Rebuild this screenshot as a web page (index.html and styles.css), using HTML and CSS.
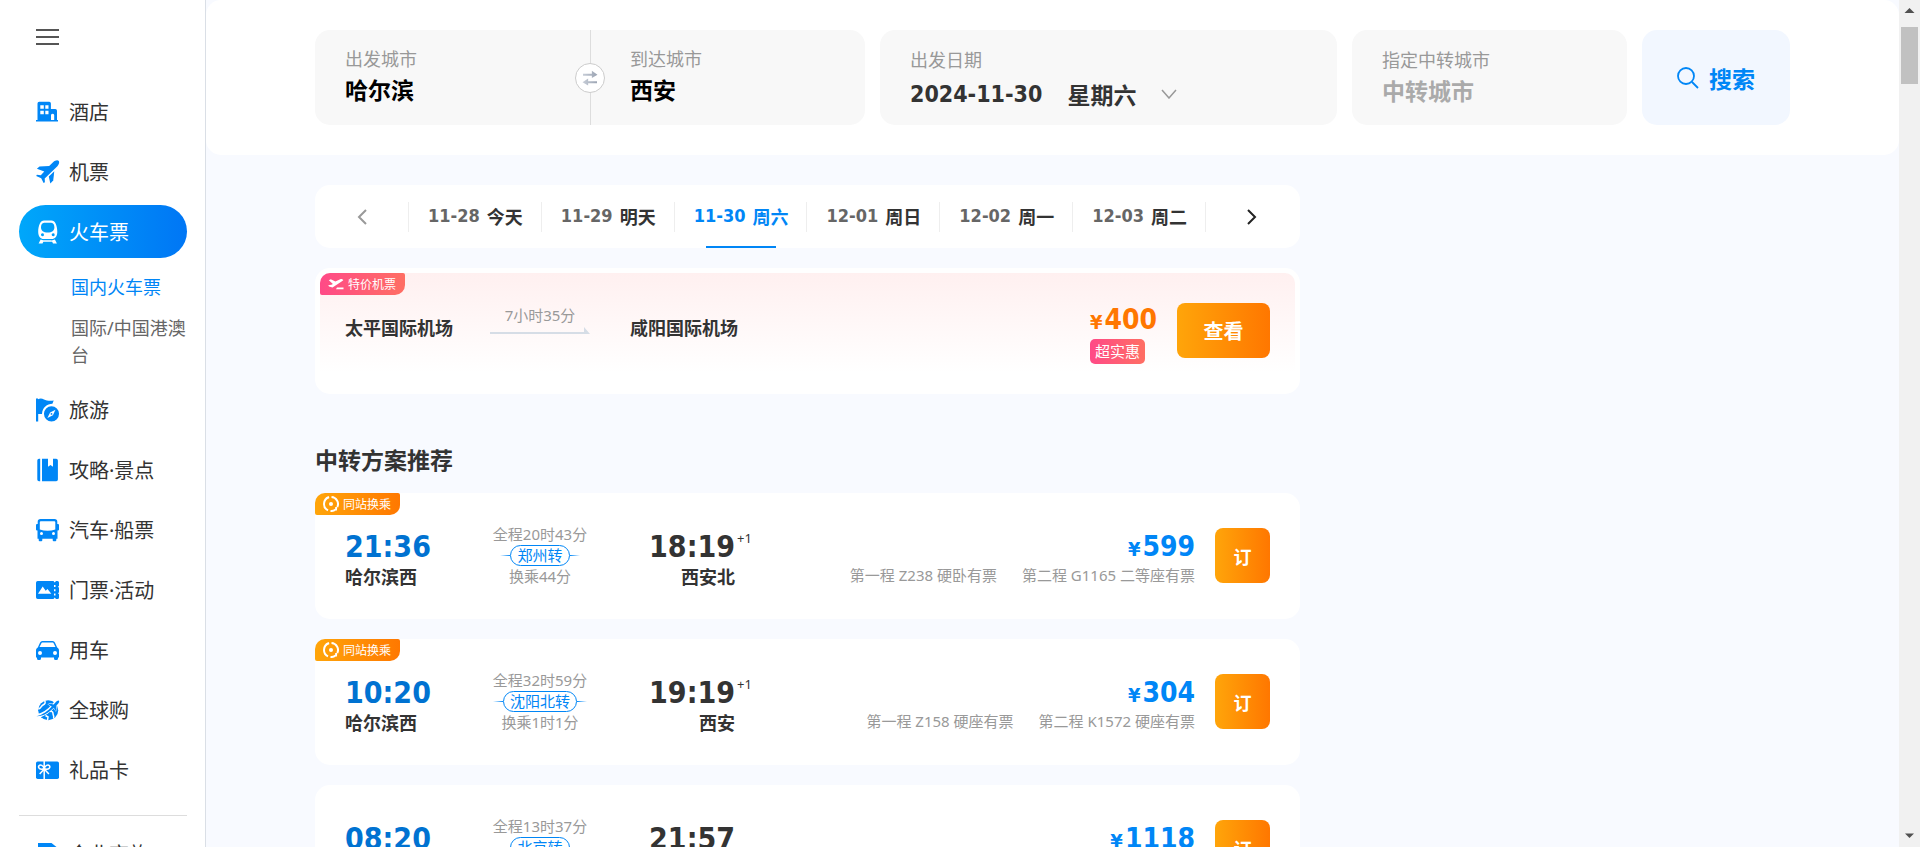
FILE: index.html
```html
<!DOCTYPE html>
<html lang="zh-CN">
<head>
<meta charset="utf-8">
<title>火车票 中转方案</title>
<link rel="stylesheet" href="styles.css">
</head>
<body>
<div class="app">
  <aside class="sidebar">
    <button class="menu-toggle" type="button" aria-label="菜单"><svg class="menu-icon" viewBox="0 0 24 24"><path d="M0 5h23M0 12h23M0 19h23"/></svg></button>
    <nav>
      <ul class="nav-list">
        <li><a class="nav-item" href="#"><svg class="nav-icon" viewBox="0 0 24 24"><path fill-rule="evenodd" d="M1.500 20V3.500a1.700 1.700 0 0 1 1.700-1.700h10a1.700 1.700 0 0 1 1.700 1.700V9h4.400A1.700 1.700 0 0 1 21 10.700V20h1v1.600H0V20zM4.300 5.300v3.500h3.500V5.300zm5 0v3.500h3.200V5.300zm-5 5.400v3.600h3.500v-3.600zm5 0v3.600h3.200v-3.600zM15 20h3.200v-5a1.700 1.700 0 0 0-3.200 0z"/></svg>酒店</a></li>
        <li><a class="nav-item" href="#"><svg class="nav-icon" viewBox="0 0 24 24"><path d="M22.600.7c-1.200-1.200-3.700-.3-5.300 1.200l-4.100 4-9.700.5L.9 8.700l7.400 2.700-3.500 3.800-3.900-.5L.2 16l5 2.300L7.600 23l1.300-.8-.2-3.700L21.400 6.200c1.500-1.600 2.400-4.300 1.200-5.500z"/><path d="M18.300 11.200l-5.500 5.200 1.500 7 2.900-2.800z"/></svg>机票</a></li>
        <li>
          <a class="nav-item active" href="#"><svg class="nav-icon" viewBox="0 0 24 24"><path fill-rule="evenodd" d="M8 .5h7.500c3.500 0 5.800 4.800 5.800 11.500 0 4.500-2.500 7-5.500 7H7.700c-3 0-5.500-2.500-5.500-7C2.200 5.300 4.500.5 8 .5zm.2 2.300C5.800 2.800 5 5 5 7.500c0 3 2.500 5 6.700 5s6.700-2 6.700-5c0-2.500-.8-4.700-3.200-4.700zM6.400 13.300a1.500 1.500 0 1 0 .1 3 1.500 1.500 0 0 0-.1-3zm10.700 0a1.500 1.500 0 1 0 .1 3 1.500 1.500 0 0 0-.1-3z"/><path d="M4.600 19.500l3.300 1-1.400 3H2.600zm14.300 0l-3.300 1 1.400 3h3.900zM7.500 20.300h8.500v1.500H7.500z"/></svg>火车票</a>
          <ul class="sub-list">
            <li><a class="sub-item current" href="#">国内火车票</a></li>
            <li><a class="sub-item" href="#">国际/中国港澳台</a></li>
          </ul>
        </li>
        <li><a class="nav-item" href="#"><svg class="nav-icon" viewBox="0 0 24 24"><path d="M0 .5h2v.7c2-.9 4-.8 6 .2s6 1.600 9.700 1l-1.300 3.400C11 6.300 6.500 9 6 16H2.200v7.500H0z"/><path fill-rule="evenodd" d="M15.500 8.300a7.500 7.500 0 1 1 0 15.100 7.500 7.500 0 0 1 0-15.100zm4 3.500l-5.400 2.700-2.700 5.500 5.500-2.700zm-4 3.200a.9.900 0 1 1 0 1.800.9.900 0 0 1 0-1.800z"/></svg>旅游</a></li>
        <li><a class="nav-item" href="#"><svg class="nav-icon" viewBox="0 0 24 24"><path d="M3 .7h1.200v22.600H3A1.700 1.700 0 0 1 1.300 21.600V2.400A1.700 1.700 0 0 1 3 .7zm3 0h6v8l2.500-1.800L17 8.700v-8h3.200a1.700 1.700 0 0 1 1.700 1.700v19.200a1.700 1.700 0 0 1-1.700 1.700H6z"/></svg>攻略·景点</a></li>
        <li><a class="nav-item" href="#"><svg class="nav-icon" viewBox="0 0 24 24"><path fill-rule="evenodd" d="M4.500 1h14a2.800 2.800 0 0 1 2.800 2.800V6H22a1 1 0 0 1 1 1v4.500a1 1 0 0 1-1 1h-.5v8.300h-1.200v1.500a1 1 0 0 1-1 1h-1.600a1 1 0 0 1-1-1v-1.500H6.300v1.500a1 1 0 0 1-1 1H3.700a1 1 0 0 1-1-1v-1.500H1.500v-8.300H1a1 1 0 0 1-1-1V7a1 1 0 0 1 1-1h.7V3.800A2.800 2.800 0 0 1 4.500 1zm.3 2.200a1 1 0 0 0-1 1v7.300c5 1.600 10.500 1.600 15.500 0V4.200a1 1 0 0 0-1-1zm.7 10.900a1.500 1.500 0 1 0 0 3 1.500 1.500 0 0 0 0-3zm12 0a1.500 1.500 0 1 0 0 3 1.500 1.500 0 0 0 0-3z"/></svg>汽车·船票</a></li>
        <li><a class="nav-item" href="#"><svg class="nav-icon" viewBox="0 0 24 24"><path fill-rule="evenodd" d="M1.700 3h15.800l1.200 1.500L20 3h1.500A1.500 1.500 0 0 1 23 4.500v3.200l-1 1 1 1v4.600l-1 1 1 1v3.200a1.500 1.500 0 0 1-1.500 1.500H20l-1.300-1.500-1.200 1.500H1.700A1.700 1.700 0 0 1 0 19.300V4.700A1.700 1.700 0 0 1 1.700 3zM2 15.800h13.300l-3.800-4.700-1.800 1.600-3-4.200zM18 7v2h1.500V7zm0 4.200v2h1.500v-2zm0 4.300v2h1.500v-2z"/></svg>门票·活动</a></li>
        <li><a class="nav-item" href="#"><svg class="nav-icon" viewBox="0 0 24 24"><path fill-rule="evenodd" d="M6.300 3h10.400a2.500 2.500 0 0 1 2.200 1.500l2.300 4.900c1.100.6 1.800 1.600 1.800 3v7h-1v1a1.500 1.500 0 0 1-1.500 1.500h-1A1.500 1.500 0 0 1 18 20.400v-1H5v1a1.500 1.500 0 0 1-1.500 1.500h-1A1.500 1.500 0 0 1 1 20.400v-1H0v-7c0-1.400.7-2.400 1.800-3l2.300-4.900A2.500 2.500 0 0 1 6.300 3zm0 1.500c-.5 0-.7.300-.9.700L3.500 9h16l-1.900-3.800c-.2-.4-.4-.7-.9-.7zM4 13a2 2 0 1 0 0 4 2 2 0 0 0 0-4zm15 0a2 2 0 1 0 0 4 2 2 0 0 0 0-4z"/></svg>用车</a></li>
        <li><a class="nav-item" href="#"><svg class="nav-icon" viewBox="0 0 24 24"><circle cx="12.200" cy="12.300" r="10"/><path class="cut thin" d="M8.500 2.500c1.500 2 .5 3.500-1.500 4.500s-1.500 3-4.500 4M14 13.500c1.500-.5 3 0 3 2s1.500 2.500.5 5M9.500 17.500l2.500 1.500-.5 3.500"/><path class="cut" d="M0 18.300C7.500 17.300 14 12 18.500 6.500L24 0"/><path d="M.5 18.200C7 16.800 12 13 15.800 8.600l-3.600-2.200.8-.9 4.600.9 1.600-1.700c1.500-1.500 3-2.500 3.700-2s.2 2-1.300 3.600l-1.500 1.600.6 4.500-.9.800-2-3.500C13.500 14 8 18.300.5 18.200z" class="jet"/></svg>全球购</a></li>
        <li><a class="nav-item" href="#"><svg class="nav-icon" viewBox="0 0 24 24"><rect y="3.500" width="23" height="17.500" rx="1.700"/><path class="cut thin" d="M8.200 3v19M8 10.500C4 12.500 1.700 9.600 3 7.800c1.300-1.700 4.500-.3 5 2.700zm.4 0c4 2 6.300-.9 5-2.700-1.300-1.700-4.500-.3-5 2.700zM8.200 11l-4.500 5M8.200 11l4.700 5"/></svg>礼品卡</a></li>
      </ul>
      <hr class="nav-rule">
      <ul class="nav-list">
        <li><a class="nav-item" href="#"><svg class="nav-icon" viewBox="0 0 24 24"><path d="M2 1h13.500l5 4v17H2z"/></svg>企业商旅</a></li>
      </ul>
    </nav>
  </aside>

  <main class="main">
    <header class="topbar">
      <form class="search">
        <div class="field cities">
          <div class="city">
            <label class="field-label" for="from">出发城市</label>
            <input class="field-input" id="from" value="哈尔滨">
          </div>
          <div class="city city-to">
            <label class="field-label" for="to">到达城市</label>
            <input class="field-input" id="to" value="西安">
          </div>
          <button class="swap" type="button" aria-label="交换城市"><svg viewBox="0 0 30 30"><defs><linearGradient id="swapA"><stop offset="0" stop-color="#c8ced8"/><stop offset="1" stop-color="#9aa3b2"/></linearGradient></defs><path fill="url(#swapA)" d="M7.500 10.500H17V7.200l6 4.400-6 3.400v-2.400H7.500zM22.500 18.500H13v-3l-6 4 6 3.600v-2.500h9.500z"/></svg></button>
        </div>
        <div class="field date">
          <span class="field-label" id="date-label">出发日期</span>
          <button class="date-value" type="button" aria-labelledby="date-label"><span>2024-11-30</span><span>星期六</span><svg class="chevron" viewBox="0 0 16 10"><path d="M1 1l7 8 7-8"/></svg></button>
        </div>
        <div class="field via">
          <label class="field-label" for="via">指定中转城市</label>
          <input class="field-input" id="via" placeholder="中转城市">
        </div>
        <button class="search-btn" type="submit"><svg class="search-icon" viewBox="0 0 22 22"><circle cx="9" cy="9" r="8"/><path d="M15 15l6 6"/></svg>搜索</button>
      </form>
    </header>

    <div class="content">
      <div class="results">
        <div class="dates">
          <button class="date-nav" type="button" aria-label="前一天"><svg class="arrow muted" viewBox="0 0 10 16"><path d="M9 1L2 8l7 7"/></svg></button>
          <button class="day" type="button"><span class="day-num">11-28</span>今天</button>
          <button class="day" type="button"><span class="day-num">11-29</span>明天</button>
          <button class="day selected" type="button"><span class="day-num">11-30</span>周六</button>
          <button class="day" type="button"><span class="day-num">12-01</span>周日</button>
          <button class="day" type="button"><span class="day-num">12-02</span>周一</button>
          <button class="day" type="button"><span class="day-num">12-03</span>周二</button>
          <button class="date-nav next" type="button" aria-label="后一天"><svg class="arrow" viewBox="0 0 10 16"><path d="M1 1l7 7-7 7"/></svg></button>
        </div>

        <section class="flight">
          <div class="flight-inner">
            <span class="tag tag-pink"><svg class="tag-plane" viewBox="0 0 16 12"><path d="M.8 2.300l2-1 4.600 2.200 4.800-2.300c1.400-.6 3 .4 3 .9 0 .6-.8 1-1.600 1.400L4.500 9.600 1 8.500l-.8-1.300 3.200-.4 1.500-.8zM9 9.600h6.500v1.600H8z"/></svg>特价机票</span>
            <div class="airport">太平国际机场</div>
            <div class="flight-time">7小时35分<svg class="flight-line" viewBox="0 0 100 7"><path d="M0 5h94V0l6 7H0z"/></svg></div>
            <div class="airport">咸阳国际机场</div>
            <div class="flight-price">
              <div class="price orange"><span class="yen">¥</span>400</div>
              <span class="deal">超实惠</span>
            </div>
            <button class="btn btn-view" type="button">查看</button>
          </div>
        </section>

        <h2 class="section-title">中转方案推荐</h2>

        <article class="plan">
          <span class="tag tag-orange"><svg class="tag-ring" viewBox="0 0 16 16"><path d="M6 1.300A7 7 0 0 0 5 14.300M7.500 15a7 7 0 0 0 5-1.500M14.300 11A7 7 0 0 0 8.500 1M3 2.500l3-1.500M13 14.500l.2-3.500"/><circle cx="8" cy="8" r="2"/></svg>同站换乘</span>
          <div class="depart"><div class="time">21:36</div><div class="station">哈尔滨西</div></div>
          <div class="transfer"><span>全程20时43分</span><span class="via-line"><span class="via-pill">郑州转</span></span><span>换乘44分</span></div>
          <div class="arrive"><div class="time">18:19<sup class="plus">+1</sup></div><div class="station">西安北</div></div>
          <div class="fare"><div class="price"><span class="yen">¥</span>599</div><div class="legs"><span>第一程 Z238 硬卧有票</span><span>第二程 G1165 二等座有票</span></div></div>
          <button class="btn" type="button">订</button>
        </article>

        <article class="plan">
          <span class="tag tag-orange"><svg class="tag-ring" viewBox="0 0 16 16"><path d="M6 1.300A7 7 0 0 0 5 14.300M7.500 15a7 7 0 0 0 5-1.500M14.300 11A7 7 0 0 0 8.500 1M3 2.500l3-1.500M13 14.500l.2-3.500"/><circle cx="8" cy="8" r="2"/></svg>同站换乘</span>
          <div class="depart"><div class="time">10:20</div><div class="station">哈尔滨西</div></div>
          <div class="transfer"><span>全程32时59分</span><span class="via-line"><span class="via-pill">沈阳北转</span></span><span>换乘1时1分</span></div>
          <div class="arrive"><div class="time">19:19<sup class="plus">+1</sup></div><div class="station">西安</div></div>
          <div class="fare"><div class="price"><span class="yen">¥</span>304</div><div class="legs"><span>第一程 Z158 硬座有票</span><span>第二程 K1572 硬座有票</span></div></div>
          <button class="btn" type="button">订</button>
        </article>

        <article class="plan">
          <div class="depart"><div class="time">08:20</div></div>
          <div class="transfer"><span>全程13时37分</span><span class="via-line"><span class="via-pill">北京转</span></span></div>
          <div class="arrive"><div class="time">21:57</div></div>
          <div class="fare"><div class="price"><span class="yen">¥</span>1118</div></div>
          <button class="btn" type="button">订</button>
        </article>
      </div>
    </div>
  </main>

  <div class="scrollbar" aria-hidden="true">
    <svg class="scroll-arrow" viewBox="0 0 21 21"><path d="M5.500 13l5-5 5 5z"/></svg>
    <div class="scroll-track"><div class="scroll-thumb"></div></div>
    <svg class="scroll-arrow" viewBox="0 0 21 21"><path d="M6 7.500l4.500 4.500L15 7.500z"/></svg>
  </div>
</div>
</body>
</html>
```

FILE: styles.css
```css
* { box-sizing: border-box; }

:root {
  --blue: #0086f6;
  --ink: #333;
  --muted: #999;
  --page: #f8faff;
  --bold-face: "DejaVu Sans Condensed", "Noto Sans CJK SC", sans-serif;
  --text-face: "Noto Sans", "Noto Sans CJK SC", sans-serif;
}

body {
  margin: 0;
  color: var(--ink);
  background: var(--page);
  font-family: var(--text-face);
  font-size: 15px;
  overflow: hidden;
}

button, input {
  border: 0;
  padding: 0;
  margin: 0;
  background: none;
  color: inherit;
  font: inherit;
}

button { cursor: pointer; }
a { color: inherit; text-decoration: none; }
ul { list-style: none; margin: 0; padding: 0; }

.app {
  display: grid;
  grid-template-columns: 206px minmax(0, 1fr) 21px;
  height: 100vh;
  overflow: hidden;
}

/* Sidebar */
.sidebar {
  min-height: 0;
  overflow: hidden;
  padding: 25px 13px 0 19px;
  background: #fff;
  border-right: 1px solid #dadfe6;
}

.menu-toggle { display: block; height: 24px; padding-left: 17px; margin-bottom: 36px; }
.menu-icon { display: block; width: 24px; height: 24px; fill: none; stroke: #555; stroke-width: 2; }

.nav-list { display: grid; gap: 7px; }
.nav-item {
  display: flex;
  align-items: center;
  gap: 9px;
  height: 53px;
  margin-right: 5px;
  padding-left: 17px;
  border-radius: 27px;
  font-size: 20px;
}
.nav-item.active { color: #fff; background: linear-gradient(90deg, #00a7fa, #0076f5); }
.nav-icon { flex: none; width: 24px; height: 24px; fill: var(--blue); }
.active .nav-icon { fill: #fff; }
.cut { fill: none; stroke: #fff; stroke-width: 4; }
.cut.thin { stroke-width: 1.500; }
.jet { stroke: #fff; stroke-width: 1; paint-order: stroke; }

.sub-list { display: grid; gap: 14px; padding: 16px 0 7px 52px; }
.sub-item { display: block; font-size: 18px; line-height: 27px; color: #666; }
.sub-item.current { color: var(--blue); }
.nav-rule { margin: 19px 5px 11px 0; border: 0; border-top: 1px solid #ddd; }

/* Search form */
.main { min-width: 0; min-height: 0; overflow: hidden; }
.topbar { padding: 30px 16px; background: #fff; border-radius: 15px; }
.search {
  display: grid;
  grid-template-columns: 550fr 457fr 275fr 148fr;
  gap: 15px;
  max-width: 1475px;
  margin: 0 auto;
}
.field { min-width: 0; min-height: 95px; padding: 17px 30px 0; background: #f8f8f8; border-radius: 15px; }
.field-label { display: block; font-size: 18px; line-height: 26px; color: var(--muted); }
.field-input {
  display: block;
  width: 100%;
  height: 34px;
  font-family: var(--bold-face);
  font-size: 23px;
  font-weight: 700;
  color: #000;
}
.field-input::placeholder { color: #aaa; opacity: 1; }
.via .field-input { height: 38px; }
.cities { position: relative; display: grid; grid-template-columns: 1fr 1fr; padding: 0; }
.city { min-width: 0; padding: 16px 30px 0; }
.city-to { padding-left: 39px; border-left: 1px solid #ddd; }
.swap {
  position: absolute;
  top: 50%;
  left: 50%;
  width: 30px;
  height: 30px;
  margin: -15px;
  border: 1px solid #ccc;
  border-radius: 50%;
  background: #fff;
}
.swap svg { display: block; width: 28px; height: 28px; }
.date-value {
  display: flex;
  align-items: center;
  gap: 25px;
  height: 42px;
  font-family: var(--bold-face);
  font-size: 23px;
  font-weight: 700;
}
.chevron { width: 16px; height: 10px; fill: none; stroke: #999; stroke-width: 1.500; }
.search-btn {
  display: flex;
  align-items: center;
  justify-content: center;
  gap: 10px;
  border-radius: 15px;
  background: #f2f7ff;
  color: var(--blue);
  font-family: var(--bold-face);
  font-size: 23px;
  font-weight: 700;
}
.search-icon { width: 22px; height: 22px; fill: none; stroke: currentColor; stroke-width: 1.800; }

/* Results */
.content {
  display: grid;
  grid-template-columns: 985fr 490fr;
  width: calc(100% - 32px);
  max-width: 1475px;
  margin: 30px auto 0;
}
.results { min-width: 0; }

.dates {
  display: grid;
  grid-template-columns: 93px repeat(6, 1fr) 95px;
  height: 63px;
  margin-bottom: 20px;
  border-radius: 15px;
  background: #fff;
}
.day {
  position: relative;
  display: flex;
  align-items: center;
  justify-content: center;
  gap: 7px;
  padding: 0 0 2px 2px;
  font-family: var(--bold-face);
  font-size: 18px;
  font-weight: 700;
  background: linear-gradient(#eee, #eee) left center / 1px 30px no-repeat;
}
.day-num { color: #666; }
.selected, .selected .day-num { color: var(--blue); }
.selected::after {
  content: "";
  position: absolute;
  bottom: 0;
  left: calc(50% - 34px);
  width: 70px;
  height: 2px;
  background: var(--blue);
}
.date-nav { display: grid; place-items: center; }
.date-nav.next { background: linear-gradient(#eee, #eee) left center / 1px 30px no-repeat; }
.arrow { width: 10px; height: 16px; fill: none; stroke: #222; stroke-width: 2; }
.arrow.muted { stroke: #999; }

.tag {
  position: absolute;
  top: 0;
  left: 0;
  display: flex;
  align-items: center;
  height: 22px;
  border-radius: 10px 2px 10px 2px;
  padding: 0 9px 0 8px;
  gap: 4px;
  color: #fff;
  font-size: 12px;
  white-space: nowrap;
}
.tag-pink { background: linear-gradient(90deg, #ff4a87, #ff6e63); }
.tag-orange { background: linear-gradient(90deg, #ffa50a, #ff7800); }
.tag-plane { width: 16px; height: 12px; fill: #fff; }
.tag-ring { width: 16px; height: 16px; fill: none; stroke: #fff; stroke-width: 2; }
.tag-ring circle { fill: #fff; stroke: none; }

.flight { min-height: 126px; padding: 5px; border-radius: 15px; background: #fff; }
.flight-inner {
  position: relative;
  display: flex;
  align-items: flex-start;
  min-height: 116px;
  padding: 30px 25px 0;
  border-radius: 10px;
  background: linear-gradient(#fff0f0, #fff 100px);
}
.airport {
  width: 145px;
  padding-top: 12px;
  font-family: var(--bold-face);
  font-size: 18px;
  line-height: 27px;
  font-weight: 700;
  white-space: nowrap;
}
.flight-time {
  width: 100px;
  margin-right: 40px;
  line-height: 24px;
  text-align: center;
  color: var(--muted);
}
.flight-line { display: block; width: 100px; height: 7px; fill: #d6dde6; }
.flight-price { margin-left: auto; margin-right: 20px; }
.price {
  font-family: var(--bold-face);
  font-size: 28px;
  line-height: 34px;
  font-weight: 700;
  color: var(--blue);
  white-space: nowrap;
}
.price.orange { color: #ff7700; }
.yen { margin-right: 2px; font-size: 20px; }
.deal {
  display: inline-block;
  padding: 0 5px;
  border-radius: 5px;
  line-height: 25px;
  color: #fff;
  background: linear-gradient(90deg, #ff4a87, #ff6e63);
}
.btn {
  flex: none;
  width: 55px;
  height: 55px;
  border-radius: 8px;
  color: #fff;
  background: linear-gradient(90deg, #ffa50a, #ff7700);
  font-family: var(--bold-face);
  font-size: 18px;
  font-weight: 700;
}
.btn-view { width: 93px; font-size: 20px; }

.section-title {
  margin: 50px 0 15px;
  font-family: var(--bold-face);
  font-size: 23px;
  line-height: 34px;
  font-weight: 700;
}

.plan {
  position: relative;
  display: flex;
  align-items: flex-start;
  min-height: 126px;
  margin-bottom: 20px;
  padding: 35px 30px 0;
  border-radius: 15px;
  background: #fff;
}
.depart { width: 110px; }
.arrive { width: 110px; text-align: right; }
.time {
  font-family: var(--bold-face);
  font-size: 30px;
  line-height: 38px;
  font-weight: 700;
}
.depart .time { color: #0072d1; }
.arrive .time { position: relative; }
.plus {
  position: absolute;
  top: 4px;
  left: 100%;
  margin-left: 2px;
  font-family: var(--text-face);
  font-size: 13px;
  line-height: 13px;
  font-weight: 400;
}
.station { font-family: var(--bold-face); font-size: 18px; line-height: 23px; font-weight: 700; }
.transfer {
  display: flex;
  flex-direction: column;
  align-items: center;
  width: 170px;
  margin-top: -4px;
  line-height: 21px;
  color: var(--muted);
}
.via-line {
  padding: 0 10px;
  background:
    linear-gradient(90deg, transparent, var(--blue)) left center / 10px 1px no-repeat,
    linear-gradient(270deg, transparent, var(--blue)) right center / 10px 1px no-repeat;
}
.via-pill {
  display: block;
  padding: 0 6px;
  border: 1px solid var(--blue);
  border-radius: 11px;
  line-height: 19px;
  color: var(--blue);
}
.fare { flex: 1; margin-right: 20px; padding-top: 2px; text-align: right; }
.legs {
  display: flex;
  justify-content: flex-end;
  gap: 25px;
  line-height: 19px;
  color: var(--muted);
  white-space: nowrap;
}

/* Scrollbar */
.scrollbar { display: flex; flex-direction: column; background: #f1f1f1; }
.scroll-arrow { width: 21px; height: 21px; fill: #505050; }
.scroll-track { flex: 1; padding: 6px 2px; }
.scroll-thumb { height: 57px; background: #c1c1c1; }
```
